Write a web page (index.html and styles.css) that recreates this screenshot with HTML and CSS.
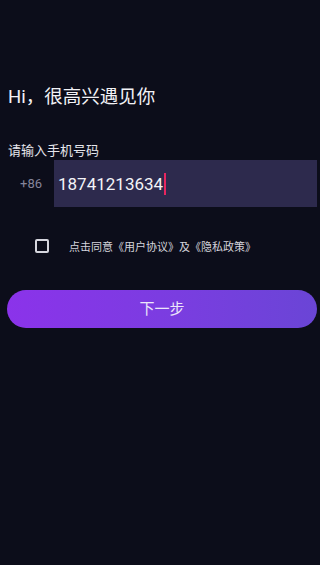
FILE: index.html
```html
<!DOCTYPE html>
<html lang="zh">
<head>
<meta charset="utf-8">
<link rel="stylesheet" href="styles.css">
</head>
<body>
<div class="page">
  <h1 class="title">Hi，很高兴遇见你</h1>
  <div class="label">请输入手机号码</div>
  <div class="phone-row">
    <div class="code">+86</div>
    <div class="input"><span class="num">18741213634</span><span class="cursor"></span></div>
  </div>
  <div class="agree">
    <span class="check"></span>
    <span class="agree-text">点击同意《用户协议》及《隐私政策》</span>
  </div>
  <button class="next">下一步</button>
</div>
</body>
</html>
```
FILE: styles.css
```css
html, body {
  margin: 0;
  padding: 0;
  background: #0c0d1a;
  height: 100%;
}
.page {
  font-family: Roboto, "Noto Sans CJK SC", sans-serif;
  color: #f0f0f4;
  padding: 84px 3px 0 7px;
  box-sizing: border-box;
}
.title {
  margin: 0 0 0 1px;
  font-size: 18.5px;
  line-height: 26px;
  font-weight: 400;
  color: #f2f2f6;
}
.label {
  margin: 32px 0 0 1px;
  font-size: 13px;
  line-height: 18px;
  color: #e6e6ec;
}
.phone-row {
  display: flex;
  height: 47px;
}
.code {
  width: 47px;
  box-sizing: border-box;
  padding-left: 13px;
  display: flex;
  align-items: center;
  font-size: 13px;
  color: #85849a;
}
.input {
  flex: 1;
  background: #2d2a4d;
  display: flex;
  align-items: center;
  padding-left: 4px;
}
.num {
  font-size: 17px;
  color: #f4f4f8;
}
.cursor {
  display: inline-block;
  width: 2px;
  height: 22px;
  background: #e8265f;
  margin-left: 1px;
}
.agree {
  display: flex;
  align-items: center;
  height: 26px;
  margin-top: 26px;
  padding-left: 28px;
}
.check {
  width: 10px;
  height: 10px;
  border: 2px solid #d6d6de;
  border-radius: 2px;
}
.agree-text {
  margin-left: 20px;
  font-size: 11px;
  color: #d4d4dc;
}
.next {
  display: block;
  width: 310px;
  height: 38px;
  margin-top: 31px;
  border: none;
  border-radius: 19px;
  background: linear-gradient(90deg, #8b33ea 0%, #7a3de0 55%, #6a45d6 100%);
  color: #ece6fa;
  font-family: Roboto, "Noto Sans CJK SC", sans-serif;
  font-size: 15px;
  padding: 0 0 3px 0;
}
```
